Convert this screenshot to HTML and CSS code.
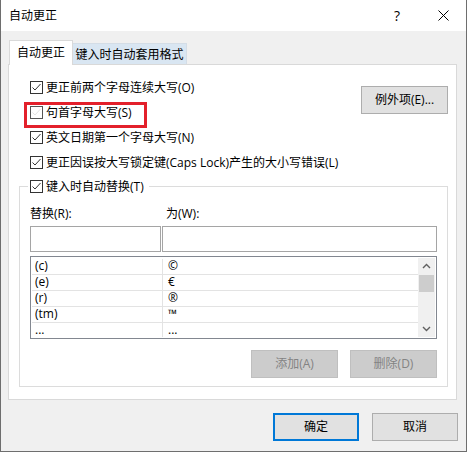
FILE: index.html
```html
<!DOCTYPE html>
<html lang="zh-CN">
<head>
<meta charset="utf-8">
<title>自动更正</title>
<link rel="stylesheet" href="styles.css">
</head>
<body>
<div class="dialog">
  <div class="titlebar">
    <span class="title">自动更正</span>
    <span class="cap help">?</span>
    <span class="cap close"><svg width="11" height="11" viewBox="0 0 11 11"><path d="M0.5 0.5 L10.5 10.5 M10.5 0.5 L0.5 10.5" stroke="#000" stroke-width="1" fill="none"/></svg></span>
  </div>
  <div class="content">
    <div class="tabs">
      <div class="tab active">自动更正</div>
      <div class="tab">键入时自动套用格式</div>
    </div>
    <div class="panel">
      <div class="top">
        <div class="checks">
          <div class="row"><svg class="cb" width="13" height="13" viewBox="0 0 13 13"><rect x="0.5" y="0.5" width="12" height="12" fill="#fff" stroke="#333"/><path d="M2.5 6.5 L5 9 L10.5 3" fill="none" stroke="#333"/></svg><span>更正前两个字母连续大写(O)</span></div>
          <div class="row marked"><svg class="cb" width="13" height="13" viewBox="0 0 13 13"><rect x="0.5" y="0.5" width="12" height="12" fill="#fff" stroke="#555"/><path d="M2.5 6.5 L5 9 L10.5 3" fill="none" stroke="#e4e4e4"/></svg><span>句首字母大写(S)</span><span class="mark"></span></div>
          <div class="row"><svg class="cb" width="13" height="13" viewBox="0 0 13 13"><rect x="0.5" y="0.5" width="12" height="12" fill="#fff" stroke="#333"/><path d="M2.5 6.5 L5 9 L10.5 3" fill="none" stroke="#333"/></svg><span>英文日期第一个字母大写(N)</span></div>
          <div class="row"><svg class="cb" width="13" height="13" viewBox="0 0 13 13"><rect x="0.5" y="0.5" width="12" height="12" fill="#fff" stroke="#333"/><path d="M2.5 6.5 L5 9 L10.5 3" fill="none" stroke="#333"/></svg><span>更正因误按大写锁定键(Caps Lock)产生的大小写错误(L)</span></div>
        </div>
        <button class="btn exc">例外项(E)...</button>
      </div>
      <div class="group">
        <div class="row legend"><svg class="cb" width="13" height="13" viewBox="0 0 13 13"><rect x="0.5" y="0.5" width="12" height="12" fill="#fff" stroke="#333"/><path d="M2.5 6.5 L5 9 L10.5 3" fill="none" stroke="#333"/></svg><span>键入时自动替换(T)</span></div>
        <div class="fields">
          <span class="lbl">替换(R):</span>
          <span class="lbl lbl2">为(W):</span>
          <span class="input"></span>
          <span class="input"></span>
        </div>
        <div class="list">
          <div class="rows">
            <div class="lrow"><span class="c1">(c)</span><span class="c2">©</span></div>
            <div class="lrow"><span class="c1">(e)</span><span class="c2">€</span></div>
            <div class="lrow"><span class="c1">(r)</span><span class="c2">®</span></div>
            <div class="lrow"><span class="c1">(tm)</span><span class="c2">™</span></div>
            <div class="lrow"><span class="c1">...</span><span class="c2">...</span></div>
          </div>
          <div class="sbar">
            <div class="arrow"><svg width="17" height="17" viewBox="0 0 17 17"><path d="M5 10 L8.5 6.5 L12 10" fill="none" stroke="#606060" stroke-width="1.4"/></svg></div>
            <div class="thumb"></div>
            <div class="track"></div>
            <div class="arrow"><svg width="17" height="17" viewBox="0 0 17 17"><path d="M5 7 L8.5 10.5 L12 7" fill="none" stroke="#606060" stroke-width="1.4"/></svg></div>
          </div>
        </div>
        <div class="actions">
          <button class="btn dis">添加(A)</button>
          <button class="btn dis">删除(D)</button>
        </div>
      </div>
    </div>
    <div class="footer">
      <button class="btn ok">确定</button>
      <button class="btn">取消</button>
    </div>
  </div>
</div>
</body>
</html>
```

FILE: styles.css
```css
* { box-sizing: border-box; }
html, body { margin: 0; padding: 0; background: #f0f0f0; }
body {
  font-family: "Open Sans", "Noto Sans CJK SC", sans-serif;
  font-size: 12px;
  color: #000;
}
.dialog {
  width: 467px;
  height: 452px;
  background: #f0f0f0;
  border: 1px solid #6e6e6e;
  border-top: 0;
  display: flex;
  flex-direction: column;
}
.titlebar {
  flex: none;
  height: 31px;
  background: #fff;
  display: flex;
  align-items: center;
}
.title { flex: 1; padding-left: 8px; line-height: 16px; }
.cap {
  width: 46px;
  height: 31px;
  display: flex;
  align-items: center;
  justify-content: center;
}
.help { font-size: 14px; }
.content {
  flex: 1;
  padding: 9px 9px 0 7px;
  display: flex;
  flex-direction: column;
}
.tabs {
  height: 25px;
  margin-bottom: -1px;
  padding-left: 1px;
  display: flex;
  align-items: flex-end;
}
.tab {
  height: 22px;
  width: 114px;
  background: #d9e6f2;
  border: 1px solid #d4dde6;
  border-bottom: 0;
  border-left: 0;
  display: flex;
  align-items: center;
  justify-content: center;
  line-height: 16px;
}
.tab.active {
  position: relative;
  width: 64px;
  height: 25px;
  background: #fff;
  border: 1px solid #d9d9d9;
  border-bottom: 0;
  padding-bottom: 1px;
}
.panel {
  background: #fff;
  border: 1px solid #d9d9d9;
  padding: 10px 8px 12px 10px;
  display: flex;
  flex-direction: column;
}
.top {
  display: flex;
  justify-content: space-between;
  align-items: flex-start;
}
.checks {
  margin-left: 11px;
  display: flex;
  flex-direction: column;
}
.row {
  height: 25px;
  display: flex;
  align-items: center;
  gap: 3px;
  white-space: nowrap;
  line-height: 16px;
}
.cb { flex: none; display: block; }
.marked { position: relative; }
.mark {
  position: absolute;
  left: -6px;
  top: 2px;
  width: 123px;
  height: 26px;
  border: 3px solid #e3202b;
}
.btn {
  font: inherit;
  width: 86px;
  height: 28px;
  padding: 0;
  background: #e1e1e1;
  border: 1px solid #adadad;
  color: #000;
  line-height: 16px;
}
.exc { width: 87px; margin-top: 11px; }
.ok { border: 2px solid #0078d7; }
.dis {
  width: 87px;
  background: #cccccc;
  border-color: #bfbfbf;
  color: #838383;
}
.group {
  margin-top: 11px;
  border: 1px solid #dcdcdc;
  padding: 0 10px 8px 10px;
  display: flex;
  flex-direction: column;
}
.legend {
  align-self: flex-start;
  margin: -13px 0 0 -2px;
  padding: 0 5px 0 2px;
  background: #fff;
}
.fields {
  margin-top: 7px;
  display: grid;
  grid-template-columns: 131px 275px;
  grid-template-rows: 16px 26px;
  column-gap: 1px;
  row-gap: 4px;
}
.lbl { line-height: 16px; }
.lbl2 { padding-left: 4px; }
.input { border: 1px solid #a5a5a5; background: #fff; }
.list {
  margin-top: 4px;
  height: 83px;
  border: 1px solid #828790;
  padding: 1px;
  display: flex;
  overflow: hidden;
  background: #fff;
}
.rows { flex: 1; padding-top: 1px; overflow: hidden; }
.lrow {
  height: 16px;
  display: flex;
  border-bottom: 1px solid #e3e3e3;
  line-height: 14px;
}
.c1 { width: 131px; border-right: 1px solid #e3e3e3; padding-left: 3px; }
.c2 { flex: 1; padding-left: 5px; }
.sbar {
  width: 17px;
  background: #f0f0f0;
  display: flex;
  flex-direction: column;
}
.arrow { height: 17px; }
.arrow svg { display: block; }
.thumb { height: 17px; margin: 0 1px; background: #cdcdcd; }
.track { flex: 1; }
.actions {
  margin-top: 11px;
  display: flex;
  justify-content: flex-end;
  gap: 12px;
}
.footer {
  margin-top: 13px;
  margin-right: -1px;
  display: flex;
  justify-content: flex-end;
  gap: 13px;
}
```
